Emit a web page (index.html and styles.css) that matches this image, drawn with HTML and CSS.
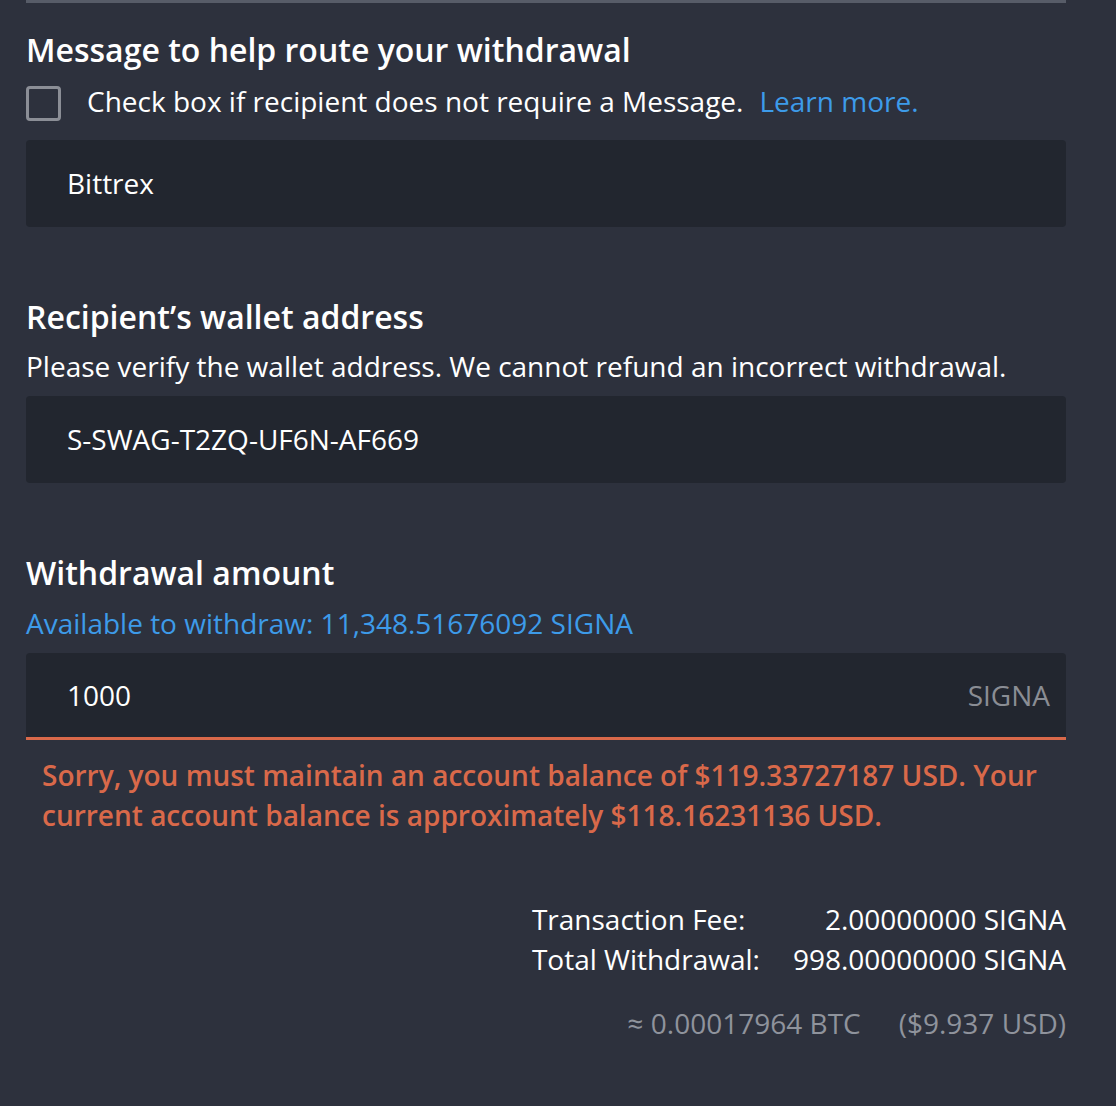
FILE: index.html
```html
<!DOCTYPE html>
<html lang="en">
<head>
    <meta charset="UTF-8">
    <meta name="viewport" content="width=device-width, initial-scale=1.0">
    <title>Withdraw SIGNA</title>
    <link rel="stylesheet" href="styles.css">
</head>
<body>
    <div class="form">
        <div class="top-rule"></div>

        <div class="section first">
            <h2>Message to help route your withdrawal</h2>
            <label class="check-row">
                <span class="checkbox"></span>
                <span>Check box if recipient does not require a Message.</span>
                <a href="#" class="link">Learn more.</a>
            </label>
            <div class="field">
                <span class="value">Bittrex</span>
            </div>
        </div>

        <div class="section">
            <h2>Recipient’s wallet address</h2>
            <p class="hint">Please verify the wallet address. We cannot refund an incorrect withdrawal.</p>
            <div class="field">
                <span class="value">S-SWAG-T2ZQ-UF6N-AF669</span>
            </div>
        </div>

        <div class="section">
            <h2>Withdrawal amount</h2>
            <p class="hint available">Available to withdraw: 11,348.51676092 SIGNA</p>
            <div class="field error">
                <span class="value">1000</span>
                <span class="unit">SIGNA</span>
            </div>
            <p class="error-text">Sorry, you must maintain an account balance of $119.33727187 USD. Your current account balance is approximately $118.16231136 USD.</p>
        </div>

        <div class="summary">
            <span>Transaction Fee:</span>
            <span class="num">2.00000000 SIGNA</span>
            <span>Total Withdrawal:</span>
            <span class="num">998.00000000 SIGNA</span>
        </div>

        <div class="estimate">
            <span>≈ 0.00017964 BTC</span>
            <span>($9.937 USD)</span>
        </div>
    </div>
</body>
</html>
```

FILE: styles.css
```css
body {
    margin: 0;
    background-color: #2d313d;
    color: #ffffff;
    font-family: "Open Sans", "Noto Sans", sans-serif;
    font-size: 28px;
    line-height: 40px;
}
.form {
    width: 1040px;
    margin-left: 26px;
}
.top-rule {
    height: 3px;
    background-color: #575c68;
}
.section {
    margin-top: 70px;
}
.section.first {
    margin-top: 27px;
}
h2 {
    margin: 0;
    font-size: 32px;
    font-weight: 600;
    line-height: 40px;
}
.check-row {
    display: flex;
    align-items: center;
    height: 44px;
    margin-top: 11px;
    cursor: pointer;
}
.check-row span:nth-child(2),
.link {
    padding-bottom: 4px;
}
.checkbox {
    width: 29px;
    height: 29px;
    border: 3px solid #8b8e96;
    border-radius: 4px;
    margin-right: 26px;
}
.link {
    color: #3d9be9;
    text-decoration: none;
    margin-left: 16px;
}
.hint {
    margin: 9px 0 0;
}
.available {
    margin-top: 10px;
    color: #3d9be9;
}
.field {
    display: flex;
    align-items: center;
    justify-content: space-between;
    height: 87px;
    margin-top: 10px;
    padding: 0 16px 2px 41px;
    background-color: #22262f;
    border-radius: 4px;
    box-sizing: border-box;
}
.first .field {
    margin-top: 15px;
}
.field.error {
    height: 87px;
    padding-bottom: 1px;
    border-bottom: 3px solid #d9694a;
    border-radius: 4px 4px 0 0;
}
.unit {
    color: #8a8d94;
}
.error-text {
    margin: 15px 0 0;
    padding-left: 16px;
    color: #d9694a;
    font-weight: 600;
}
.summary {
    display: grid;
    grid-template-columns: auto auto;
    justify-content: end;
    column-gap: 33px;
    margin-top: 64px;
}
.summary .num {
    text-align: right;
}
.estimate {
    display: flex;
    justify-content: flex-end;
    gap: 38px;
    margin-top: 24px;
    color: #8f939c;
}
```
